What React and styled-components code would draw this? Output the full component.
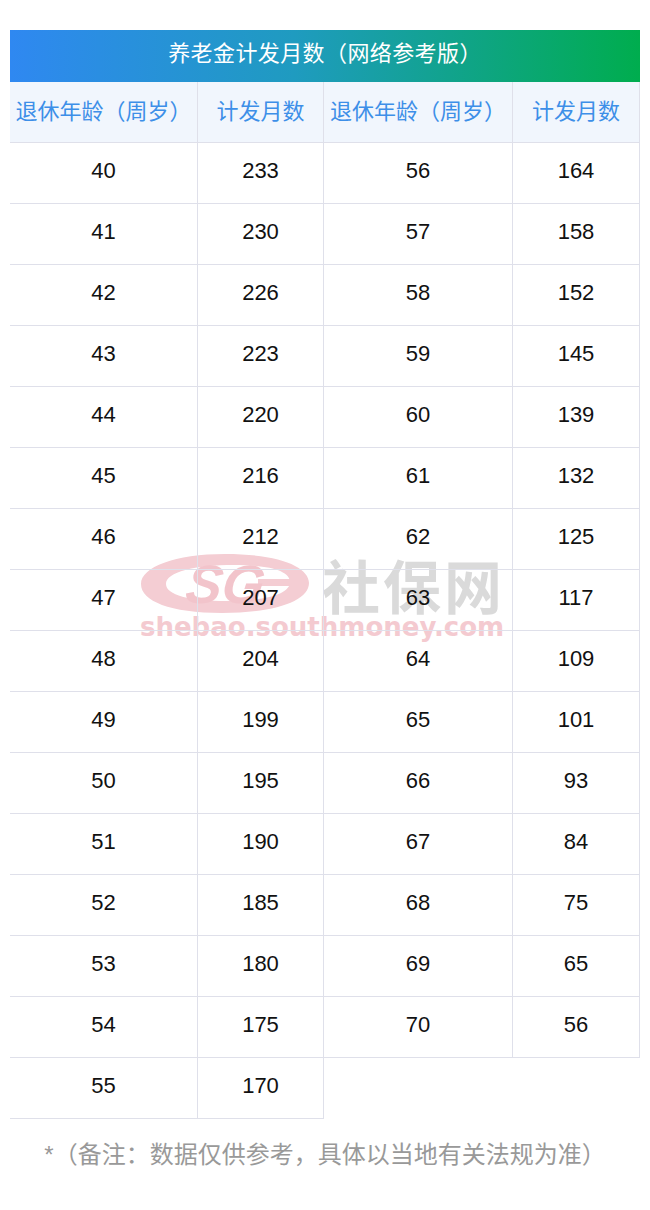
import React from "react";
import styled, { createGlobalStyle } from "styled-components";

const GlobalStyle = createGlobalStyle`
    body {
        margin: 0;
        background: #fff;
        font-family: "Liberation Sans", "Noto Sans CJK SC", sans-serif;
    }
`;

// dados: [idade, meses]
const left = [
    [40, 233], [41, 230], [42, 226], [43, 223], [44, 220], [45, 216],
    [46, 212], [47, 207], [48, 204], [49, 199], [50, 195], [51, 190],
    [52, 185], [53, 180], [54, 175], [55, 170],
];

const right = [
    [56, 164], [57, 158], [58, 152], [59, 145], [60, 139], [61, 132],
    [62, 125], [63, 117], [64, 109], [65, 101], [66, 93], [67, 84],
    [68, 75], [69, 65], [70, 56],
];

const Wrapper = styled.div`
    position: relative;
    padding: 30px 10px 0;
    width: 630px;
`;

const TitleBar = styled.div`
    height: 52px;
    line-height: 48px;
    padding-bottom: 4px;
    box-sizing: border-box;
    text-align: center;
    color: #fff;
    font-size: 22px;
    letter-spacing: 0.4px;
    background: linear-gradient(90deg, #2f88f1 0%, #1f9bc0 45%, #00ad4e 100%);
`;

const Grid = styled.div`
    position: relative;
    z-index: 1;
    display: grid;
    grid-template-columns: 188px 126px 189px 127px;
`;

const Cell = styled.div`
    height: 56px;
    padding-bottom: 4px;
    display: flex;
    align-items: center;
    justify-content: center;
    border-right: 1px solid #dfe0ea;
    border-bottom: 1px solid #dfe0ea;
    box-sizing: content-box;
    font-size: 22px;
    color: #111;
    ${({ head }) =>
        head &&
        `
        height: 54px;
        padding-bottom: 6px;
        background: #f1f6fd;
        color: #3d8fe8;
        white-space: nowrap;
    `}
`;

const Blank = styled.div`
    grid-column: span 2;
`;

const Watermark = styled.div`
    position: absolute;
    left: 140px;
    top: 553px;
    z-index: 0;
    pointer-events: none;
    display: flex;
    flex-direction: column;
`;

const MarkTop = styled.div`
    display: flex;
    align-items: center;
    gap: 12px;
`;

const MarkName = styled.span`
    font-family: "Noto Sans CJK SC", sans-serif;
    font-weight: 700;
    font-size: 58px;
    line-height: 62px;
    letter-spacing: 3px;
    color: #dadada;
`;

const MarkSite = styled.span`
    font-family: "DejaVu Sans", sans-serif;
    font-weight: 700;
    font-size: 26px;
    line-height: 28px;
    margin-top: -2px;
    color: #f4cad0;
`;

const Note = styled.div`
    padding-top: 18px;
    line-height: 36px;
    text-align: center;
    font-size: 24px;
    color: #999;
`;

const Logo = () => (
    <svg width="170" height="62" viewBox="0 0 170 62">
        <path
            fillRule="evenodd"
            fill="#f4cdd3"
            d="M85 1 C140 1 169 14 169 30 C169 48 135 60 82 60 C30 60 1 48 1 31 C1 14 35 1 85 1 Z
               M94 12 C55 12 26 19 26 31 C26 42 50 48 86 48 C126 48 150 41 150 29 C150 18 130 12 94 12 Z"
        />
        <rect x="118" y="26" width="44" height="7" fill="#f4cdd3" />
        <text
            x="90"
            y="50"
            textAnchor="middle"
            fontFamily="Liberation Sans, sans-serif"
            fontStyle="italic"
            fontWeight="700"
            fontSize="54"
            fill="#f2c4cb"
            transform="skewX(-8)"
        >
            SG
        </text>
    </svg>
);

const App = () => {
    const rows = [];
    left.forEach((l, i) => {
        const r = right[i];
        rows.push(<Cell key={`a${i}`}>{l[0]}</Cell>);
        rows.push(<Cell key={`b${i}`}>{l[1]}</Cell>);
        if (r) {
            rows.push(<Cell key={`c${i}`}>{r[0]}</Cell>);
            rows.push(<Cell key={`d${i}`}>{r[1]}</Cell>);
        } else {
            rows.push(<Blank key={`e${i}`} />);
        }
    });

    return (
        <Wrapper>
            <GlobalStyle />
            <TitleBar>养老金计发月数（网络参考版）</TitleBar>
            <Grid>
                <Cell head>退休年龄（周岁）</Cell>
                <Cell head>计发月数</Cell>
                <Cell head>退休年龄（周岁）</Cell>
                <Cell head>计发月数</Cell>
                {rows}
            </Grid>
            <Note>*（备注：数据仅供参考，具体以当地有关法规为准）</Note>
            <Watermark>
                <MarkTop>
                    <Logo />
                    <MarkName>社保网</MarkName>
                </MarkTop>
                <MarkSite>shebao.southmoney.com</MarkSite>
            </Watermark>
        </Wrapper>
    );
};

export default App;
